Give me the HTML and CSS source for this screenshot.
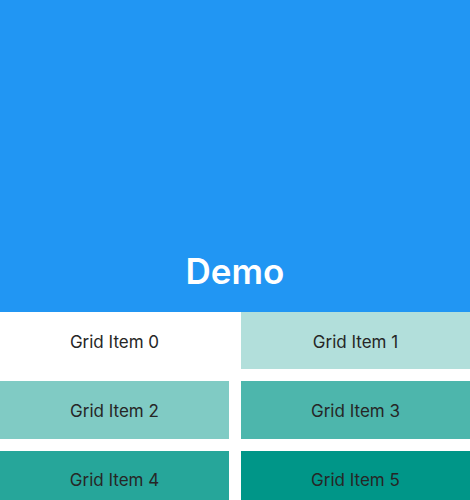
FILE: index.html
```html
<!DOCTYPE html>
<html>
<head>
<meta charset="utf-8">
<link rel="stylesheet" href="styles.css">
</head>
<body>
<header class="bar"><h1 class="title">Demo</h1></header>
<main class="grid">
  <div class="cell c0">Grid Item 0</div>
  <div class="cell c1">Grid Item 1</div>
  <div class="cell c2">Grid Item 2</div>
  <div class="cell c3">Grid Item 3</div>
  <div class="cell c4">Grid Item 4</div>
  <div class="cell c5">Grid Item 5</div>
</main>
</body>
</html>
```
FILE: styles.css
```css
html, body { margin: 0; padding: 0; background: #ffffff; overflow: hidden; }
body { font-family: Inter, "Noto Sans", sans-serif; width: 470px; height: 500px; }
.bar {
  height: 312px;
  background: #2196f3;
  display: flex;
  flex-direction: column;
  justify-content: flex-end;
  align-items: center;
  box-sizing: border-box;
  padding-bottom: 21px;
}
.title {
  margin: 0;
  color: #ffffff;
  font-size: 35px;
  line-height: 40px;
  font-weight: 600;
}
.grid {
  display: grid;
  grid-template-columns: 1fr 1fr;
  grid-auto-rows: 57.25px;
  gap: 12px;
}
.cell {
  display: flex;
  align-items: center;
  justify-content: center;
  font-size: 17px;
  padding-top: 2px;
  box-sizing: border-box;
  color: #262626;
}
.c0 { background: #ffffff; }
.c1 { background: #b2dfdb; }
.c2 { background: #80cbc4; }
.c3 { background: #4db6ac; }
.c4 { background: #26a69a; }
.c5 { background: #009688; }
```
